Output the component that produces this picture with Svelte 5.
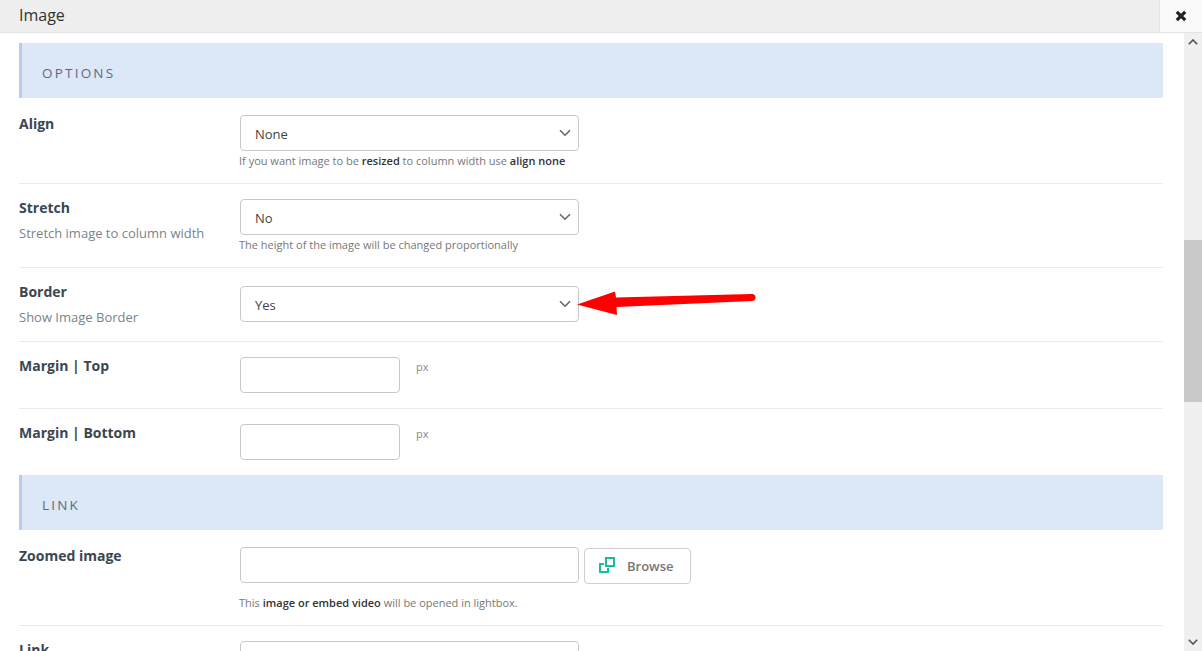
<script>
  const optionRows = [
    { label: 'Align', value: 'None', help: 'align', kind: 'align' },
    { label: 'Stretch', sub: 'Stretch image to column width', value: 'No', help: 'stretch', kind: 'stretch' },
    { label: 'Border', sub: 'Show Image Border', value: 'Yes', kind: 'border' }
  ];
</script>

<div class="modal">
  <header class="title-bar">
    <h1>Image</h1>
    <button class="close" type="button" aria-label="Close">
      <svg width="12" height="12" viewBox="0 0 12 12"><path d="M1.800 1.800l8.400 8.400M10.200 1.800l-8.400 8.400" stroke="#222" stroke-width="3.200" /></svg>
    </button>
  </header>

  <div class="body">
    <div class="content">
      <h2 class="section first">Options</h2>

      {#each optionRows as row}
        <div class="row {row.kind}">
          <div class="label">
            <strong>{row.label}</strong>
            {#if row.sub}<span>{row.sub}</span>{/if}
          </div>
          <div class="field">
            <div class="select">
              {row.value}
              <svg width="12" height="8" viewBox="0 0 12 8"><path d="M1 1.200l5 5 5-5" fill="none" stroke="#666" stroke-width="1.600" /></svg>
            </div>
            {#if row.help === 'align'}
              <p class="help">If you want image to be <b>resized</b> to column width use <b>align none</b></p>
            {:else if row.help === 'stretch'}
              <p class="help">The height of the image will be changed proportionally</p>
            {/if}
          </div>
        </div>
      {/each}

      <div class="row short">
        <div class="label"><strong>Margin | Top</strong></div>
        <div class="field inline"><div class="input small"></div><span class="unit">px</span></div>
      </div>
      <div class="row short last">
        <div class="label"><strong>Margin | Bottom</strong></div>
        <div class="field inline"><div class="input small"></div><span class="unit">px</span></div>
      </div>

      <h2 class="section">Link</h2>

      <div class="row zoomed">
        <div class="label"><strong>Zoomed image</strong></div>
        <div class="field">
          <div class="browse-line">
            <div class="input"></div>
            <button class="browse" type="button">
              <svg width="16" height="16" viewBox="0 0 16 16" fill="none" stroke="#1abc9c" stroke-width="2"><path d="M7 1h8v8H7z" /><path d="M5 7H1v8h8v-4" /></svg>
              Browse
            </button>
          </div>
          <p class="help">This <b>image or embed video</b> will be opened in lightbox.</p>
        </div>
      </div>

      <div class="row link">
        <div class="label"><strong>Link</strong></div>
        <div class="field"><div class="input"></div></div>
      </div>
    </div>

    <div class="scrollbar">
      <svg class="arrow-up" width="10" height="6" viewBox="0 0 10 6"><path d="M.8 5.200L5 1l4.200 4.200" fill="none" stroke="#505050" stroke-width="1.600" /></svg>
      <div class="track"><div class="thumb"></div></div>
      <svg class="arrow-down" width="10" height="6" viewBox="0 0 10 6"><path d="M.8.8L5 5 9.200.8" fill="none" stroke="#505050" stroke-width="1.600" /></svg>
    </div>
  </div>

  <!-- annotation drawn on top of the screenshot -->
  <svg class="annotation" width="190" height="32" viewBox="0 0 190 32">
    <path d="M1 19.500L39 6.500l1 6 136-3.500a3.500 3.500 0 0 1 0 7L40.500 22l.5 8z" fill="#fe0000" />
  </svg>
</div>

<style>
  :global(body) {
    margin: 0;
    background: #fff;
  }

  .modal {
    position: relative;
    width: 1202px;
    height: 651px;
    overflow: hidden;
    display: flex;
    flex-direction: column;
    font-family: "Open Sans", sans-serif;
    color: #3a4750;
  }

  .title-bar {
    flex: none;
    height: 33px;
    box-sizing: border-box;
    display: flex;
    justify-content: space-between;
    background: #eeeeee;
    border-bottom: 1px solid #e2e2e2;
  }

  h1 {
    margin: 0 0 0 19px;
    font-size: 16px;
    font-weight: 400;
    line-height: 30px;
    color: #333;
  }

  .close {
    width: 43px;
    padding: 0;
    background: #fafafa;
    border: none;
    border-left: 1px solid #e2e2e2;
    display: flex;
    align-items: center;
    justify-content: center;
  }

  .body {
    flex: 1;
    min-height: 0;
    display: flex;
  }

  .content {
    flex: 1;
    padding: 0 21px 0 19px;
    overflow: hidden;
  }

  .section {
    margin: 0;
    height: 55px;
    padding-left: 20px;
    background: #dce7f7;
    border-left: 3px solid #b9cce8;
    font-size: 13.500px;
    font-weight: 400;
    line-height: 60px;
    letter-spacing: 2.200px;
    text-transform: uppercase;
    color: #5c6b7a;
  }

  .section.first {
    margin-top: 10px;
  }

  .row {
    display: flex;
    height: 84px;
    box-sizing: border-box;
    padding-top: 15px;
    border-bottom: 1px solid #ebebeb;
  }

  .row.align {
    height: 86px;
    padding-top: 17px;
  }

  .row.border {
    height: 74px;
  }

  .row.border .select {
    margin-top: 3px;
  }

  .row.short {
    height: 67px;
  }

  .row.last {
    height: 66px;
    border-bottom: none;
  }

  .row.zoomed {
    height: 96px;
    padding-top: 17px;
  }

  .row.link {
    border-bottom: none;
  }

  .label {
    flex: none;
    width: 221px;
    display: flex;
    flex-direction: column;
  }

  .label strong {
    font-size: 14px;
    font-weight: 700;
    line-height: 18px;
    color: #3a4750;
  }

  .label span {
    margin-top: 7px;
    font-size: 13px;
    line-height: 18px;
    color: #7a848c;
  }

  .select,
  .input {
    box-sizing: border-box;
    width: 339px;
    height: 36px;
    background: #fff;
    border: 1px solid #c8c8c8;
    border-radius: 4px;
  }

  .select {
    display: flex;
    align-items: center;
    justify-content: space-between;
    padding: 1px 7px 0 14px;
    font-size: 13px;
    color: #444;
  }

  .select svg {
    margin-top: -1px;
  }

  .input.small {
    width: 160px;
  }

  .help {
    margin: 2px 0 0 -1px;
    font-size: 11px;
    line-height: 15px;
    color: #777;
  }

  .help b {
    font-weight: 600;
    color: #333;
  }

  .inline {
    display: flex;
    align-items: flex-start;
  }

  .unit {
    margin: 1px 0 0 16px;
    font-size: 11px;
    line-height: 18px;
    color: #888;
  }

  .browse-line {
    display: flex;
    gap: 5px;
    margin-bottom: 11px;
  }

  .browse {
    width: 107px;
    height: 36px;
    margin-top: 1px;
    padding: 0 0 0 14px;
    display: flex;
    align-items: center;
    gap: 12px;
    background: #fff;
    border: 1px solid #cfcfcf;
    border-radius: 4px;
    font-family: inherit;
    font-size: 13px;
    font-weight: 600;
    color: #757575;
  }

  .browse svg {
    margin-top: -2px;
  }

  .scrollbar {
    flex: none;
    width: 18px;
    display: flex;
    flex-direction: column;
    align-items: center;
    background: #f0f0f0;
  }

  .arrow-up {
    flex: none;
    margin: 6px 0;
  }

  .arrow-down {
    flex: none;
    margin: 6px 0;
  }

  .track {
    flex: 1;
    width: 100%;
    padding-top: 189px;
    box-sizing: border-box;
  }

  .thumb {
    height: 162px;
    background: #c9c9c9;
  }

  .annotation {
    position: absolute;
    left: 576px;
    top: 285px;
  }
</style>
